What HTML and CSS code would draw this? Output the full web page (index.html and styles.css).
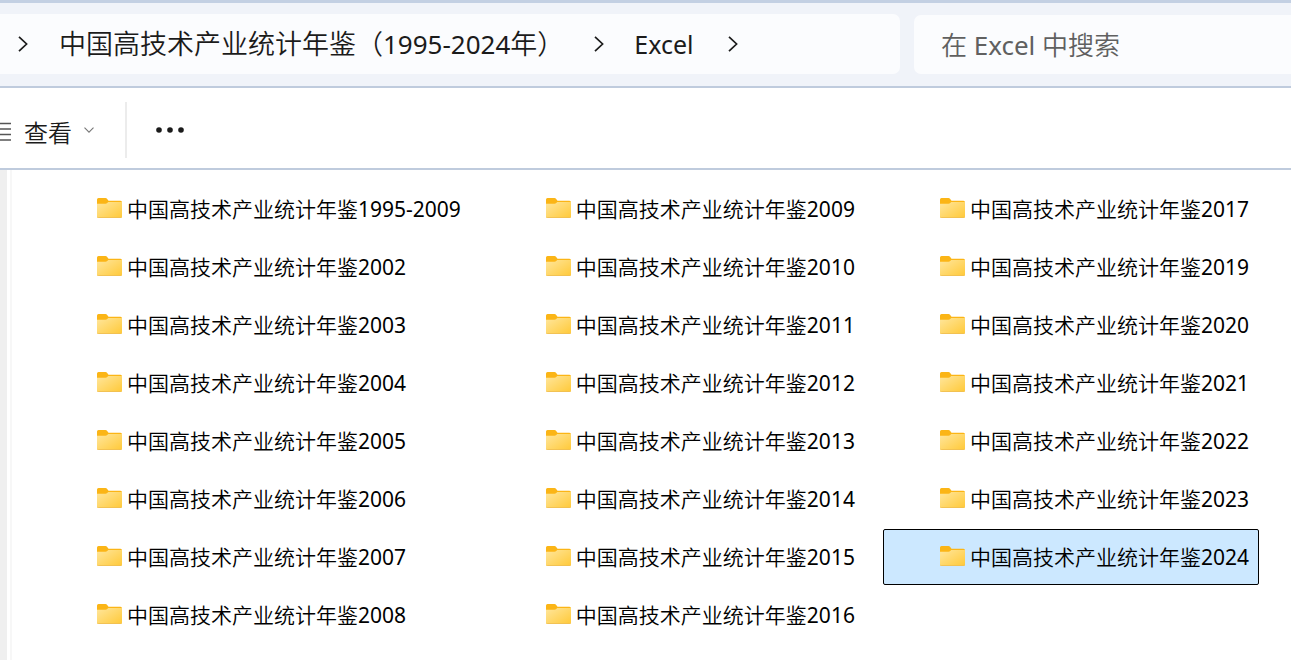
FILE: index.html
```html
<!DOCTYPE html>
<html lang="zh-CN">
<head>
<meta charset="utf-8">
<meta name="viewport" content="width=device-width, initial-scale=1">
<title>Excel</title>
<link rel="stylesheet" href="styles.css">
</head>
<body>
<svg class="defs" aria-hidden="true">
  <defs>
    <linearGradient id="front" x1="0" y1="0" x2="1" y2="1">
      <stop offset="0" stop-color="#ffe69c"/>
      <stop offset="1" stop-color="#ffc938"/>
    </linearGradient>
    <symbol id="folder" viewBox="0 0 25 20">
      <path d="M0 1.500Q0 0 1.500 0H8.500Q9.500 0 10.200 1L11.500 2.700H23.500Q25 2.700 25 4.200V10H0Z" fill="#fbb516"/>
      <path d="M0 5.800H8.500Q9.500 5.800 10.200 5L11.200 4H25V18.500Q25 20 23.500 20H1.500Q0 20 0 18.500Z" fill="url(#front)"/>
      <path d="M0.300 19.100Q.8 19.600 1.500 19.600H23.500Q24.200 19.600 24.700 19.100" fill="none" stroke="#efbd52" stroke-width=".9"/>
    </symbol>
    <symbol id="chevron" viewBox="0 0 10 16">
      <path d="M1 .8 8.600 8 1 15.200" fill="none" stroke="#1b1b1b" stroke-width="1.700"/>
    </symbol>
  </defs>
</svg>

<header class="navigation">
  <nav class="address" aria-label="路径">
    <svg class="chevron" aria-hidden="true"><use href="#chevron"/></svg>
    <a class="crumb crumb-parent" href="#">中国高技术产业统计年鉴（<span class="latin">1995-2024</span>年）</a>
    <svg class="chevron" aria-hidden="true"><use href="#chevron"/></svg>
    <a class="crumb crumb-current" href="#"><span class="latin">Excel</span></a>
    <svg class="chevron" aria-hidden="true"><use href="#chevron"/></svg>
  </nav>
  <input class="search" type="search" aria-label="搜索" placeholder="在 Excel 中搜索">
</header>

<div class="toolbar">
  <button class="view" type="button">
    <svg class="view-icon" viewBox="0 0 11 20" aria-hidden="true"><path d="M0 1.500H11M0 7H11M0 12.500H11M0 18H11" stroke="#555" stroke-width="1.400"/></svg>
    <span>查看</span>
    <svg class="view-arrow" viewBox="0 0 10 6" aria-hidden="true"><path d="M.5.7 5 5.200 9.500.7" fill="none" stroke="#777" stroke-width="1.100"/></svg>
  </button>
  <button class="more" type="button" aria-label="更多">
    <svg class="more-icon" viewBox="0 0 28 6" aria-hidden="true"><g fill="#1b1b1b"><circle cx="3" cy="3" r="2.800"/><circle cx="14" cy="3" r="2.800"/><circle cx="25" cy="3" r="2.800"/></g></svg>
  </button>
</div>

<main class="content">
  <ul class="files">
    <li><button class="file" type="button"><svg class="folder" aria-hidden="true"><use href="#folder"/></svg>中国高技术产业统计年鉴1995-2009</button></li>
    <li><button class="file" type="button"><svg class="folder" aria-hidden="true"><use href="#folder"/></svg>中国高技术产业统计年鉴2002</button></li>
    <li><button class="file" type="button"><svg class="folder" aria-hidden="true"><use href="#folder"/></svg>中国高技术产业统计年鉴2003</button></li>
    <li><button class="file" type="button"><svg class="folder" aria-hidden="true"><use href="#folder"/></svg>中国高技术产业统计年鉴2004</button></li>
    <li><button class="file" type="button"><svg class="folder" aria-hidden="true"><use href="#folder"/></svg>中国高技术产业统计年鉴2005</button></li>
    <li><button class="file" type="button"><svg class="folder" aria-hidden="true"><use href="#folder"/></svg>中国高技术产业统计年鉴2006</button></li>
    <li><button class="file" type="button"><svg class="folder" aria-hidden="true"><use href="#folder"/></svg>中国高技术产业统计年鉴2007</button></li>
    <li><button class="file" type="button"><svg class="folder" aria-hidden="true"><use href="#folder"/></svg>中国高技术产业统计年鉴2008</button></li>
    <li><button class="file" type="button"><svg class="folder" aria-hidden="true"><use href="#folder"/></svg>中国高技术产业统计年鉴2009</button></li>
    <li><button class="file" type="button"><svg class="folder" aria-hidden="true"><use href="#folder"/></svg>中国高技术产业统计年鉴2010</button></li>
    <li><button class="file" type="button"><svg class="folder" aria-hidden="true"><use href="#folder"/></svg>中国高技术产业统计年鉴2011</button></li>
    <li><button class="file" type="button"><svg class="folder" aria-hidden="true"><use href="#folder"/></svg>中国高技术产业统计年鉴2012</button></li>
    <li><button class="file" type="button"><svg class="folder" aria-hidden="true"><use href="#folder"/></svg>中国高技术产业统计年鉴2013</button></li>
    <li><button class="file" type="button"><svg class="folder" aria-hidden="true"><use href="#folder"/></svg>中国高技术产业统计年鉴2014</button></li>
    <li><button class="file" type="button"><svg class="folder" aria-hidden="true"><use href="#folder"/></svg>中国高技术产业统计年鉴2015</button></li>
    <li><button class="file" type="button"><svg class="folder" aria-hidden="true"><use href="#folder"/></svg>中国高技术产业统计年鉴2016</button></li>
    <li><button class="file" type="button"><svg class="folder" aria-hidden="true"><use href="#folder"/></svg>中国高技术产业统计年鉴2017</button></li>
    <li><button class="file" type="button"><svg class="folder" aria-hidden="true"><use href="#folder"/></svg>中国高技术产业统计年鉴2019</button></li>
    <li><button class="file" type="button"><svg class="folder" aria-hidden="true"><use href="#folder"/></svg>中国高技术产业统计年鉴2020</button></li>
    <li><button class="file" type="button"><svg class="folder" aria-hidden="true"><use href="#folder"/></svg>中国高技术产业统计年鉴2021</button></li>
    <li><button class="file" type="button"><svg class="folder" aria-hidden="true"><use href="#folder"/></svg>中国高技术产业统计年鉴2022</button></li>
    <li><button class="file" type="button"><svg class="folder" aria-hidden="true"><use href="#folder"/></svg>中国高技术产业统计年鉴2023</button></li>
    <li><button class="file file-selected" type="button" aria-pressed="true"><svg class="folder" aria-hidden="true"><use href="#folder"/></svg>中国高技术产业统计年鉴2024</button></li>
  </ul>
</main>
</body>
</html>
```
FILE: styles.css
```css
* {
  box-sizing: border-box;
}

body {
  margin: 0;
  background: #fff;
  color: #1b1b1b;
  font-family: "Noto Sans", "Noto Sans CJK SC DemiLight", "Noto Sans CJK SC", sans-serif;
  font-weight: 400;
}

button,
input {
  font: inherit;
  color: inherit;
  border: 0;
  background: none;
}

svg {
  display: block;
  flex: none;
}

.defs {
  position: absolute;
  width: 0;
  height: 0;
}

.navigation {
  display: grid;
  grid-template-columns: 900fr 377fr;
  gap: 14px;
  padding: 11px 0 12px;
  border-top: 3px solid #c3d0e3;
  border-bottom: 2px solid #bfcbdd;
  background: #f0f3f9;
}

.address {
  display: flex;
  align-items: center;
  height: 60px;
  padding-left: 18px;
  border-radius: 0 7px 7px 0;
  background: #fbfcfe;
  white-space: nowrap;
}

.chevron {
  width: 10px;
  height: 16px;
}

.crumb {
  color: inherit;
  font-size: 27px;
  line-height: 40px;
  text-decoration: none;
}

.crumb-parent {
  padding: 0 30px 0 31px;
}

.crumb-current {
  padding: 0 34px 0 30px;
}

.crumb-current .latin {
  font-size: 25px;
}

.latin {
  font-size: 26px;
}

.search {
  width: 100%;
  min-width: 0;
  height: 59px;
  margin: 1px 0 0;
  padding: 0 0 0 27px;
  border-radius: 7px 0 0 7px;
  background: #fbfcfe;
  font-size: 26px;
}

.search::placeholder {
  color: #606060;
  opacity: 1;
}

.toolbar {
  display: flex;
  align-items: center;
  height: 82px;
  padding-top: 4px;
  border-bottom: 2px solid #bfcbdd;
}

.view {
  display: flex;
  align-items: center;
  height: 56px;
  padding: 6px 31px 0 0;
  border-right: 2px solid #ececec;
  font-size: 24px;
  line-height: 36px;
}

.view-icon {
  width: 11px;
  height: 20px;
  margin: 0 13px 2px 0;
}

.view-arrow {
  width: 10px;
  height: 6px;
  margin: 0 0 6px 12px;
}

.more {
  padding: 12px 29px;
}

.more-icon {
  width: 28px;
  height: 6px;
}

.content {
  display: flex;
  border-left: 7px solid #efefef;
}

.files {
  flex: 1;
  display: grid;
  grid-template-rows: repeat(8, 56px);
  grid-auto-flow: column;
  justify-content: start;
  gap: 2px 18px;
  margin: 0 0 0 3px;
  padding: 11px 0 17px 28px;
  border-left: 2px solid #f7f7f7;
  list-style: none;
}

.file {
  display: flex;
  align-items: center;
  gap: 5px;
  width: 100%;
  height: 56px;
  padding: 0 9px 2px 56px;
  border: 1px solid transparent;
  border-radius: 2px;
  color: #000;
  font-size: 21px;
  white-space: nowrap;
}

.file-selected {
  border-color: #000;
  background: #cce8ff;
}

.folder {
  width: 25px;
  height: 20px;
}
```
